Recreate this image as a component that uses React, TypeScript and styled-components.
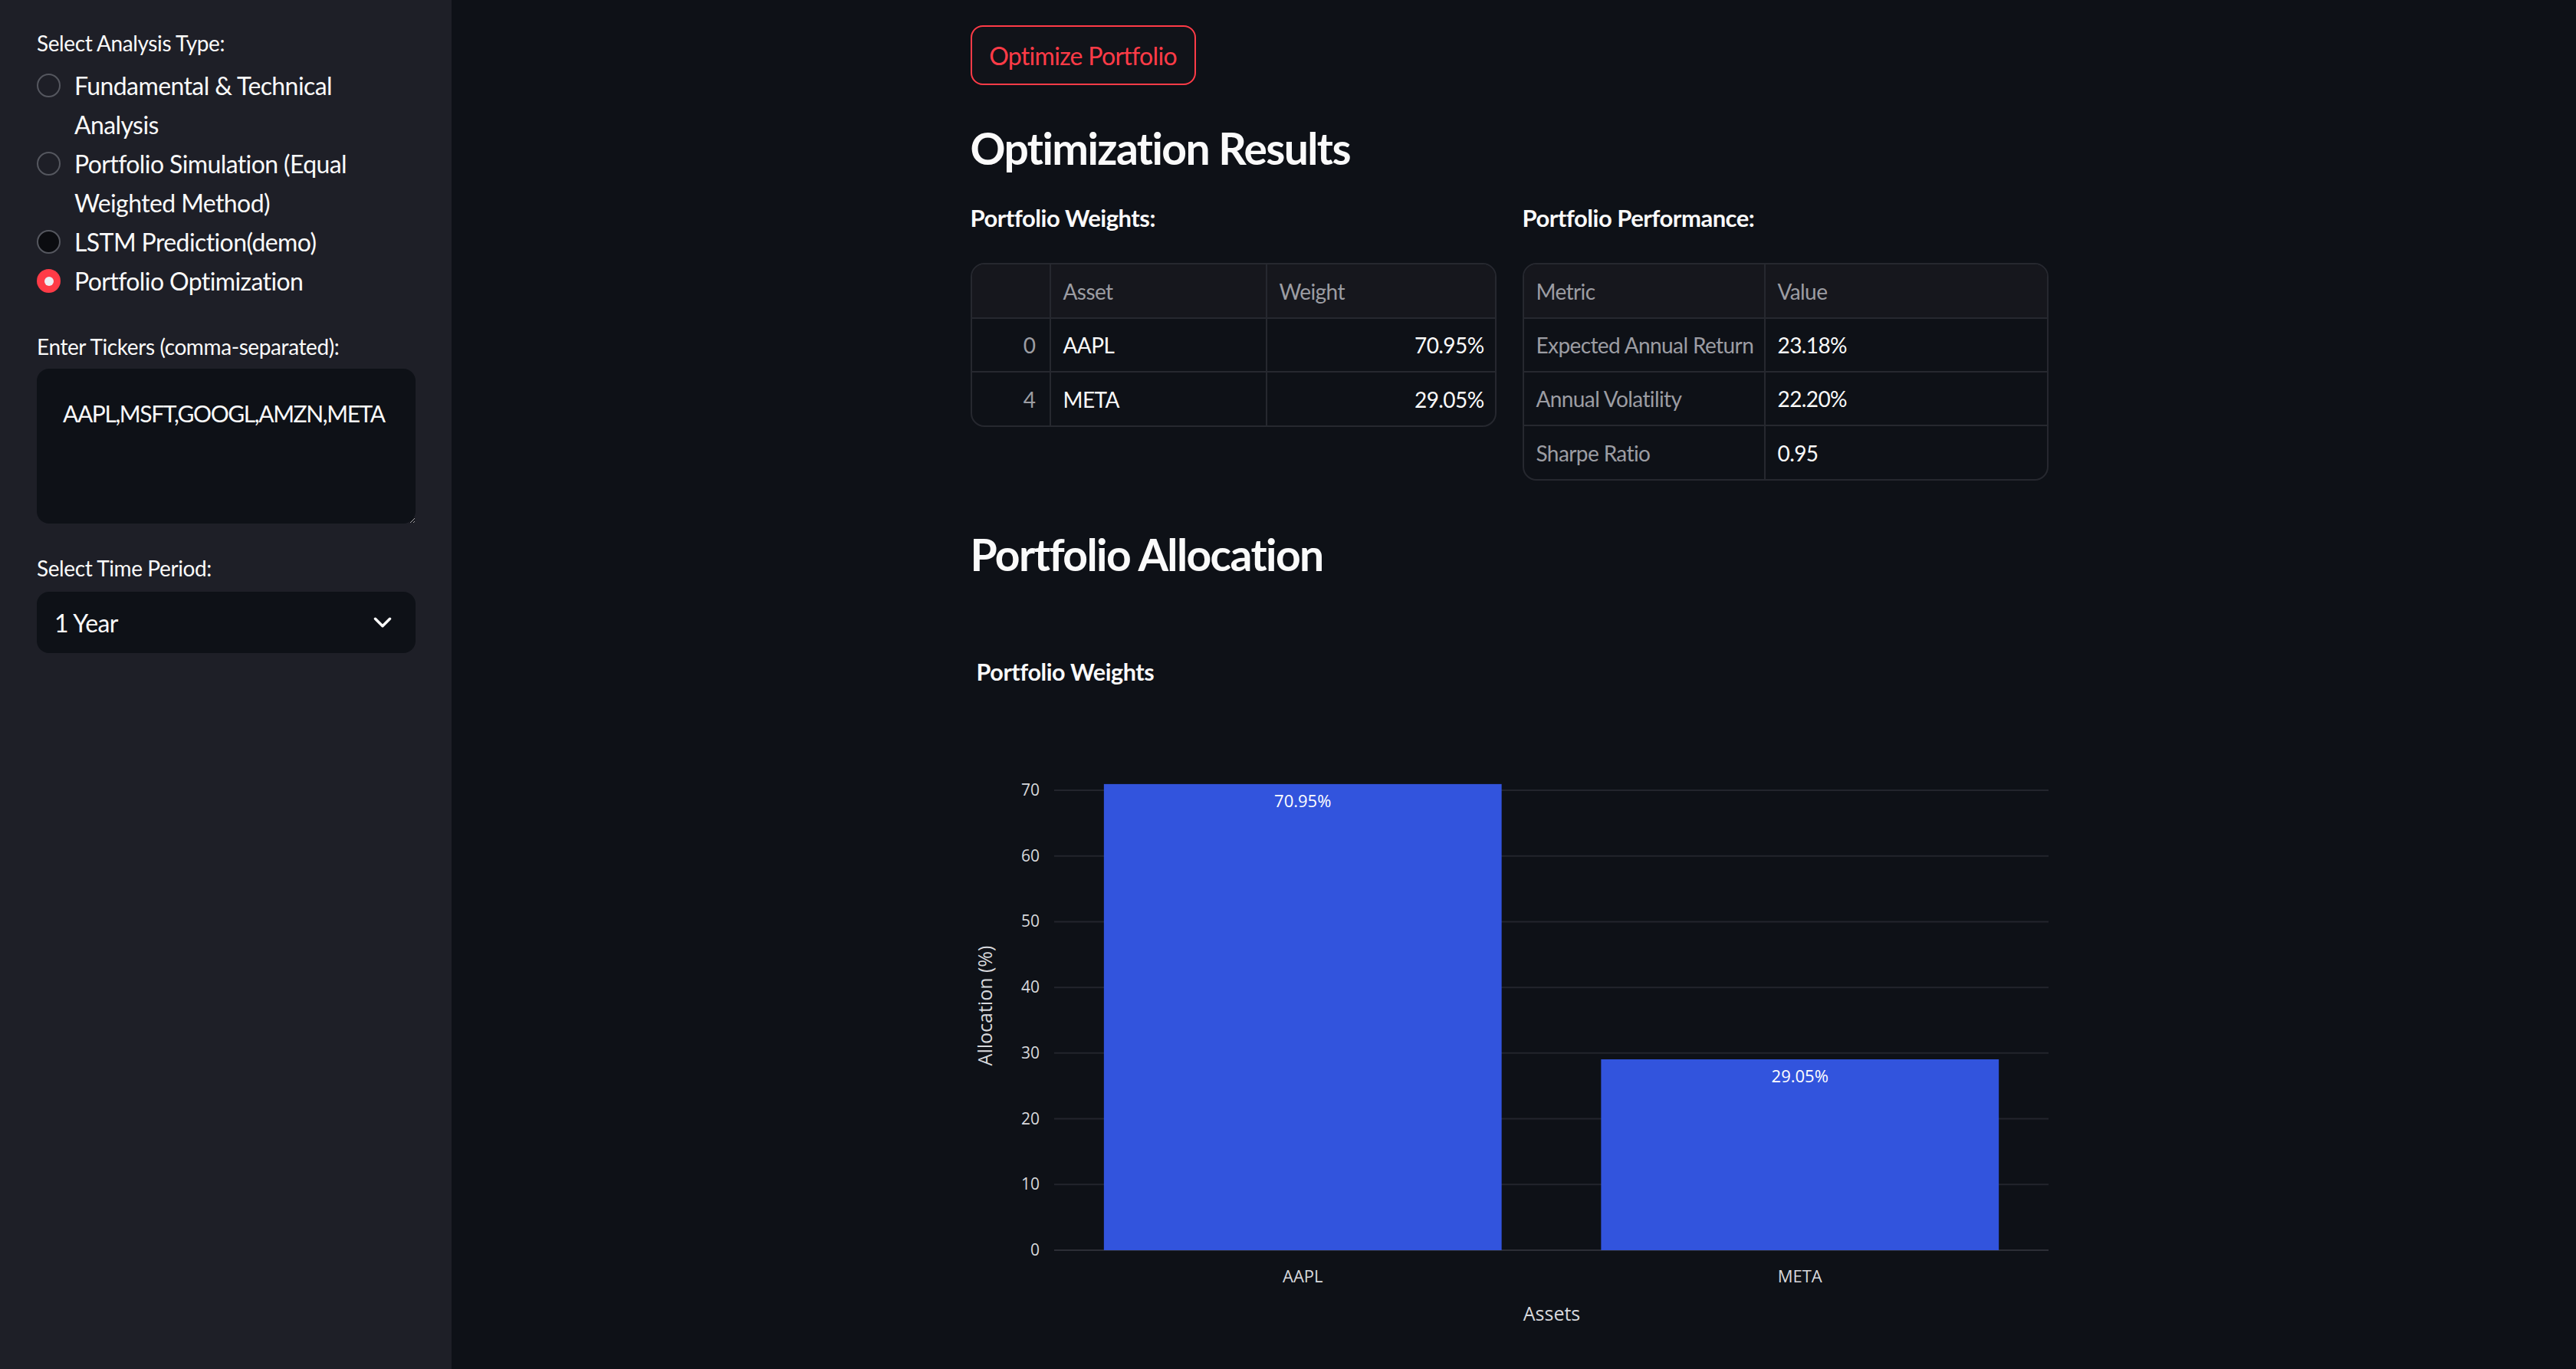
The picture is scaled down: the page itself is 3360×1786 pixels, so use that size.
import React from "react";
import styled, { createGlobalStyle } from "styled-components";
import { ChevronDown } from "lucide-react";

const GlobalStyle = createGlobalStyle`
  html, body {
    margin: 0;
    padding: 0;
    background: #0e1117;
  }
  body {
    font-family: Lato, "Noto Sans", sans-serif;
    color: #fafafa;
  }
  * {
    box-sizing: border-box;
  }
`;

const Page = styled.div`
  display: flex;
  width: 3360px;
  height: 1786px;
  overflow: hidden;
  background: #0e1117;
`;

const Sidebar = styled.aside`
  width: 589px;
  flex-shrink: 0;
  background: #1e1f27;
  padding: 36px 47px 0 48px;
  display: flex;
  flex-direction: column;
`;

const FieldLabel = styled.div<{ $gap?: number }>`
  font-size: 28px;
  line-height: 40px;
  height: 40px;
  letter-spacing: -0.4px;
  margin-top: ${(p) => p.$gap ?? 0}px;
  color: #fafafa;
`;

const RadioGroup = styled.div`
  margin-top: 10px;
  display: flex;
  flex-direction: column;
`;

const RadioItem = styled.label`
  display: flex;
  align-items: flex-start;
  gap: 18px;
`;

const RadioDot = styled.span<{ $state: "off" | "dark" | "on" }>`
  width: 31px;
  height: 31px;
  margin-top: 10px;
  border-radius: 50%;
  flex-shrink: 0;
  display: flex;
  align-items: center;
  justify-content: center;
  border: ${(p) => (p.$state === "on" ? "none" : "2px solid #55575f")};
  background: ${(p) =>
    p.$state === "on" ? "#ff3b47" : p.$state === "dark" ? "#0b0c10" : "transparent"};

  &::after {
    content: "";
    display: ${(p) => (p.$state === "on" ? "block" : "none")};
    width: 12px;
    height: 12px;
    border-radius: 50%;
    background: #eceef3;
  }
`;

const RadioText = styled.span`
  font-size: 32px;
  line-height: 51px;
  letter-spacing: -0.6px;
  white-space: nowrap;
`;

const TickerBox = styled.textarea`
  margin-top: 9px;
  width: 494px;
  height: 202px;
  background: #0e1117;
  border: none;
  border-radius: 16px;
  padding: 33px 20px 33px 34px;
  color: #fafafa;
  font-family: Lato, "Noto Sans", sans-serif;
  font-size: 30px;
  line-height: 51px;
  letter-spacing: -1.4px;
  resize: vertical;
  outline: none;
  overflow: hidden;
  color-scheme: dark;
`;

const SelectBox = styled.div`
  margin-top: 11px;
  height: 80px;
  background: #0e1117;
  border-radius: 16px;
  padding: 0 24px 0 23px;
  display: flex;
  align-items: center;
  justify-content: space-between;
  font-size: 32px;
  letter-spacing: -0.6px;
`;

const Main = styled.main`
  flex: 1;
  padding-right: 12px;
`;

const Content = styled.div`
  width: 1406px;
  margin: 0 auto;
  padding-top: 33px;
  display: flex;
  flex-direction: column;
`;

const OutlineButton = styled.button`
  width: 294px;
  height: 78px;
  border: 2px solid #ff3b47;
  border-radius: 16px;
  background: #111319;
  color: #ff3b47;
  font-family: Lato, "Noto Sans", sans-serif;
  font-size: 32px;
  letter-spacing: -0.7px;
  padding: 0;
`;

const SectionTitle = styled.h3<{ $gap: number }>`
  margin: ${(p) => p.$gap}px 0 0;
  font-size: 57px;
  line-height: 72px;
  font-weight: 700;
  letter-spacing: -1.6px;
`;

const Columns = styled.div`
  margin-top: 35px;
  display: grid;
  grid-template-columns: 686px 686px;
  column-gap: 34px;
  align-items: start;
`;

const ColumnTitle = styled.div`
  font-size: 31px;
  line-height: 40px;
  font-weight: 700;
  letter-spacing: -0.5px;
  margin-bottom: 39px;
`;

const TableFrame = styled.div`
  border: 2px solid #26282f;
  border-radius: 18px;
  overflow: hidden;
`;

const Table = styled.table`
  width: 100%;
  border-collapse: collapse;
  table-layout: fixed;
  font-size: 28px;
  letter-spacing: -0.6px;
`;

const HeadCell = styled.th<{ $w: number }>`
  width: ${(p) => p.$w}px;
  height: 70px;
  background: #16171d;
  color: #9c9da3;
  font-weight: 400;
  text-align: left;
  padding: 0 16px;
  border-right: 2px solid #26282f;
  border-bottom: 2px solid #26282f;
  &:last-child {
    border-right: none;
  }
`;

const Cell = styled.td<{ $align?: "left" | "right"; $muted?: boolean }>`
  height: 70px;
  padding: 0 18px 0 16px;
  text-align: ${(p) => p.$align ?? "left"};
  color: ${(p) => (p.$muted ? "#9c9da3" : "#fafafa")};
  border-right: 2px solid #26282f;
  border-bottom: 2px solid #26282f;
  white-space: nowrap;
  &:last-child {
    border-right: none;
  }
  tr:last-child & {
    border-bottom: none;
  }
`;

const ChartTitle = styled.div`
  margin-top: 97px;
  padding-left: 8px;
  font-size: 30.5px;
  line-height: 40px;
  font-weight: 700;
  letter-spacing: -0.4px;
`;

const ChartSvg = styled.svg`
  display: block;
  margin-top: 5px;
  font-family: "Open Sans", "Noto Sans", sans-serif;
`;

const options = [
  { lines: ["Fundamental & Technical", "Analysis"], state: "off" as const },
  { lines: ["Portfolio Simulation (Equal", "Weighted Method)"], state: "off" as const },
  { lines: ["LSTM Prediction(demo)"], state: "dark" as const },
  { lines: ["Portfolio Optimization"], state: "on" as const },
];

const weights = [
  { idx: 0, asset: "AAPL", weight: 70.95 },
  { idx: 4, asset: "META", weight: 29.05 },
];

const performance = [
  { metric: "Expected Annual Return", value: "23.18%" },
  { metric: "Annual Volatility", value: "22.20%" },
  { metric: "Sharpe Ratio", value: "0.95" },
];

function WeightsChart() {
  const zeroY = 730;
  const unit = 8.571;
  const plotLeft = 109;
  const plotRight = 1406;
  const slot = (plotRight - plotLeft) / weights.length;
  const barW = slot * 0.8;
  const ticks = [0, 10, 20, 30, 40, 50, 60, 70];

  return (
    <ChartSvg width={1406} height={880} viewBox="0 0 1406 880">
      {ticks.map((t) => (
        <g key={t}>
          <line
            x1={plotLeft}
            x2={plotRight}
            y1={zeroY - t * unit}
            y2={zeroY - t * unit}
            stroke={t === 0 ? "#2c2e36" : "#23252d"}
            strokeWidth={2}
          />
          <text
            x={90}
            y={zeroY - t * unit + 7}
            textAnchor="end"
            fontSize={21}
            fill="#d8d9dd"
          >
            {t}
          </text>
        </g>
      ))}
      {weights.map((w, i) => {
        const cx = plotLeft + slot * i + slot / 2;
        const top = zeroY - w.weight * unit;
        return (
          <g key={w.asset}>
            <rect x={cx - barW / 2} y={top} width={barW} height={w.weight * unit} fill="#3254dd" />
            <text x={cx} y={top + 30} textAnchor="middle" fontSize={22} fill="#ffffff">
              {w.weight.toFixed(2)}%
            </text>
            <text x={cx} y={zeroY + 42} textAnchor="middle" fontSize={22} fill="#d8d9dd">
              {w.asset}
            </text>
          </g>
        );
      })}
      <text x={758} y={822} textAnchor="middle" fontSize={25} fill="#d8d9dd">
        Assets
      </text>
      <text
        x={0}
        y={0}
        transform="translate(28 411) rotate(-90)"
        textAnchor="middle"
        fontSize={25}
        fill="#d8d9dd"
      >
        Allocation (%)
      </text>
    </ChartSvg>
  );
}

export default function App() {
  return (
    <>
      <GlobalStyle />
      <Page>
        <Sidebar>
          <FieldLabel>Select Analysis Type:</FieldLabel>
          <RadioGroup>
            {options.map((o) => (
              <RadioItem key={o.lines[0]}>
                <RadioDot $state={o.state} />
                <RadioText>
                  {o.lines.map((l, i) => (
                    <React.Fragment key={l}>
                      {i > 0 && <br />}
                      {l}
                    </React.Fragment>
                  ))}
                </RadioText>
              </RadioItem>
            ))}
          </RadioGroup>

          <FieldLabel $gap={40}>Enter Tickers (comma-separated):</FieldLabel>
          <TickerBox defaultValue="AAPL,MSFT,GOOGL,AMZN,META" spellCheck={false} wrap="off" />

          <FieldLabel $gap={38}>Select Time Period:</FieldLabel>
          <SelectBox>
            <span>1 Year</span>
            <ChevronDown size={38} strokeWidth={2.2} color="#fafafa" />
          </SelectBox>
        </Sidebar>

        <Main>
          <Content>
            <OutlineButton>Optimize Portfolio</OutlineButton>
            <SectionTitle $gap={46}>Optimization Results</SectionTitle>

            <Columns>
              <div>
                <ColumnTitle>Portfolio Weights:</ColumnTitle>
                <TableFrame>
                  <Table>
                    <thead>
                      <tr>
                        <HeadCell $w={102} />
                        <HeadCell $w={282}>Asset</HeadCell>
                        <HeadCell $w={302}>Weight</HeadCell>
                      </tr>
                    </thead>
                    <tbody>
                      {weights.map((w) => (
                        <tr key={w.asset}>
                          <Cell $align="right" $muted>
                            {w.idx}
                          </Cell>
                          <Cell>{w.asset}</Cell>
                          <Cell $align="right">{w.weight.toFixed(2)}%</Cell>
                        </tr>
                      ))}
                    </tbody>
                  </Table>
                </TableFrame>
              </div>

              <div>
                <ColumnTitle>Portfolio Performance:</ColumnTitle>
                <TableFrame>
                  <Table>
                    <thead>
                      <tr>
                        <HeadCell $w={314}>Metric</HeadCell>
                        <HeadCell $w={372}>Value</HeadCell>
                      </tr>
                    </thead>
                    <tbody>
                      {performance.map((p) => (
                        <tr key={p.metric}>
                          <Cell $muted>{p.metric}</Cell>
                          <Cell>{p.value}</Cell>
                        </tr>
                      ))}
                    </tbody>
                  </Table>
                </TableFrame>
              </div>
            </Columns>

            <SectionTitle $gap={60}>Portfolio Allocation</SectionTitle>
            <ChartTitle>Portfolio Weights</ChartTitle>
            <WeightsChart />
          </Content>
        </Main>
      </Page>
    </>
  );
}
